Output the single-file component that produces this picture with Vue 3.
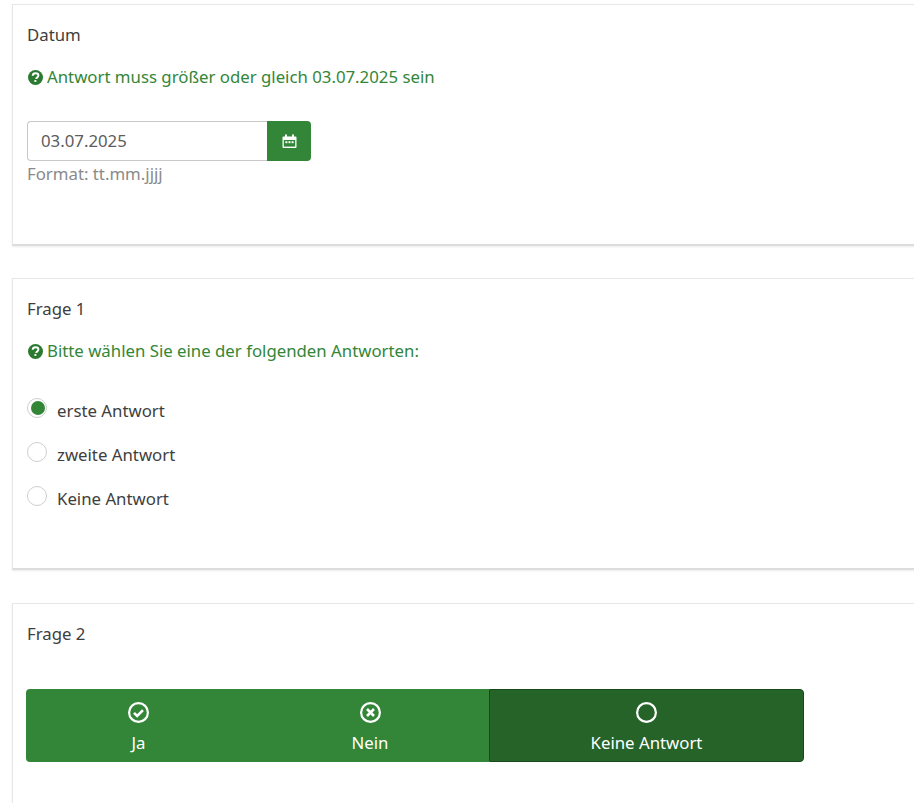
<script setup>
const radios = [
  { label: 'erste Antwort', checked: true },
  { label: 'zweite Antwort', checked: false },
  { label: 'Keine Antwort', checked: false },
]
</script>

<template>
  <div class="page">
    <section class="card card-date">
      <div class="title">Datum</div>
      <div class="hint">
        <svg class="hint-icon" viewBox="0 0 16 16"><circle cx="8" cy="8" r="8" fill="#2c7a31"/><path d="M5 6.1C5.1 4.4 6.4 3.4 8.1 3.4c1.8 0 3 1 3 2.5 0 1.1-.7 1.7-1.5 2.2-.6.4-.8.7-.8 1.2v.4" fill="none" stroke="#fff" stroke-width="2.1"/><rect x="6.8" y="10.7" width="2.1" height="2" fill="#fff"/></svg>
        <span>Antwort muss größer oder gleich 03.07.2025 sein</span>
      </div>
      <div class="date-group">
        <div class="date-input">03.07.2025</div>
        <div class="date-btn">
          <svg width="15" height="15" viewBox="0 0 15 15"><rect x="3" y="0.5" width="2" height="3" fill="#fff"/><rect x="10" y="0.5" width="2" height="3" fill="#fff"/><path d="M0.5 3.5a1 1 0 0 1 1-1h12a1 1 0 0 1 1 1v9.5a1 1 0 0 1-1 1h-12a1 1 0 0 1-1-1z" fill="#fff"/><rect x="1.8" y="6" width="11.4" height="6.6" fill="#338638"/><rect x="3.4" y="7.2" width="2" height="2" fill="#fff"/><rect x="6.5" y="7.2" width="2" height="2" fill="#fff"/><rect x="9.6" y="7.2" width="2" height="2" fill="#fff"/></svg>
        </div>
      </div>
      <div class="format">Format: tt.mm.jjjj</div>
    </section>

    <section class="card card-radio">
      <div class="title">Frage 1</div>
      <div class="hint">
        <svg class="hint-icon" viewBox="0 0 16 16"><circle cx="8" cy="8" r="8" fill="#2c7a31"/><path d="M5 6.1C5.1 4.4 6.4 3.4 8.1 3.4c1.8 0 3 1 3 2.5 0 1.1-.7 1.7-1.5 2.2-.6.4-.8.7-.8 1.2v.4" fill="none" stroke="#fff" stroke-width="2.1"/><rect x="6.8" y="10.7" width="2.1" height="2" fill="#fff"/></svg>
        <span>Bitte wählen Sie eine der folgenden Antworten:</span>
      </div>
      <div class="radios">
        <div v-for="r in radios" :key="r.label" class="radio-row">
          <span class="radio" :class="{ checked: r.checked }"></span>
          <span class="radio-label">{{ r.label }}</span>
        </div>
      </div>
    </section>

    <section class="card card-buttons">
      <div class="title">Frage 2</div>
      <div class="btn-group">
        <div class="opt opt-ja">
          <svg class="opt-icon" viewBox="0 0 21 21"><circle cx="10.5" cy="10.5" r="9.4" fill="none" stroke="#fff" stroke-width="2.2"/><path d="M6 10.8l3.2 3.2 5.8-5.8" fill="none" stroke="#fff" stroke-width="2.6"/></svg>
          <span>Ja</span>
        </div>
        <div class="opt opt-nein">
          <svg class="opt-icon" viewBox="0 0 21 21"><circle cx="10.5" cy="10.5" r="9.4" fill="none" stroke="#fff" stroke-width="2.2"/><path d="M7 7l7 7M14 7l-7 7" fill="none" stroke="#fff" stroke-width="2.6"/></svg>
          <span>Nein</span>
        </div>
        <div class="opt opt-keine">
          <svg class="opt-icon" viewBox="0 0 21 21"><circle cx="10.5" cy="10.5" r="9.4" fill="none" stroke="#fff" stroke-width="2.2"/></svg>
          <span>Keine Antwort</span>
        </div>
      </div>
    </section>
  </div>
</template>

<style>
html, body { margin: 0; background: #fff; overflow: hidden; }
</style>

<style scoped>
.page {
  width: 914px;
  height: 803px;
  overflow: hidden;
  box-sizing: border-box;
  padding: 4px 0 0 12px;
  font-family: "Noto Sans", sans-serif;
  font-size: 16.8px;
  line-height: 22px;
  color: #3e3e3e;
}
.card {
  width: 1000px;
  box-sizing: border-box;
  border: 1px solid #e7e7e7;
  border-bottom: 2px solid #dcdcdc;
  padding: 0 14px;
  background: #fff;
  box-shadow: 0 1px 2px rgba(0,0,0,.08);
}
.card-date { height: 242px; margin-bottom: 32px; }
.card-radio { height: 292px; margin-bottom: 33px; }
.card-buttons { height: 260px; }
.title { padding-top: 19px; height: 22px; }
.hint {
  margin-top: 20px;
  height: 22px;
  display: flex;
  align-items: center;
  gap: 4px;
  color: #338638;
  padding-left: 1px;
}
.hint-icon { width: 15px; height: 15px; flex: none; }
.date-group { display: flex; margin-top: 33px; width: 284px; height: 40px; }
.date-input {
  flex: 1;
  box-sizing: border-box;
  border: 1px solid #c8c8c8;
  border-right: 0;
  border-radius: 4px 0 0 4px;
  padding: 0 13px;
  line-height: 38px;
  color: #5d5d5d;
}
.date-btn {
  width: 44px;
  background: #338638;
  border-radius: 0 4px 4px 0;
  display: flex;
  align-items: center;
  justify-content: center;
}
.format { color: #8a8a8a; margin-top: 2px; }
.radios { margin-top: 38px; display: flex; flex-direction: column; gap: 22px; }
.radio-row { display: flex; height: 22px; align-items: center; }
.radio {
  width: 20px;
  height: 20px;
  box-sizing: border-box;
  border: 1px solid #cfcfcf;
  border-radius: 50%;
  margin-top: -6px;
  flex: none;
  position: relative;
}
.radio.checked::after {
  content: "";
  position: absolute;
  left: 2.5px;
  top: 1.5px;
  width: 14px;
  height: 14px;
  border-radius: 50%;
  background: #338638;
}
.radio-label { margin-left: 10px; }
.btn-group {
  display: flex;
  margin-top: 44px;
  margin-left: -1px;
  width: 778px;
  height: 73px;
}
.opt {
  box-sizing: border-box;
  color: #fff;
  background: #338638;
  display: flex;
  flex-direction: column;
  align-items: center;
  padding-top: 13px;
  gap: 9px;
}
.opt-icon { width: 21px; height: 21px; }
.opt-ja { width: 225px; border-radius: 4px 0 0 4px; }
.opt-nein { width: 238px; }
.opt-keine {
  width: 315px;
  background: #256329;
  border: 1px solid #174a1b;
  border-radius: 0 4px 4px 0;
  padding-top: 12px;
}
</style>
